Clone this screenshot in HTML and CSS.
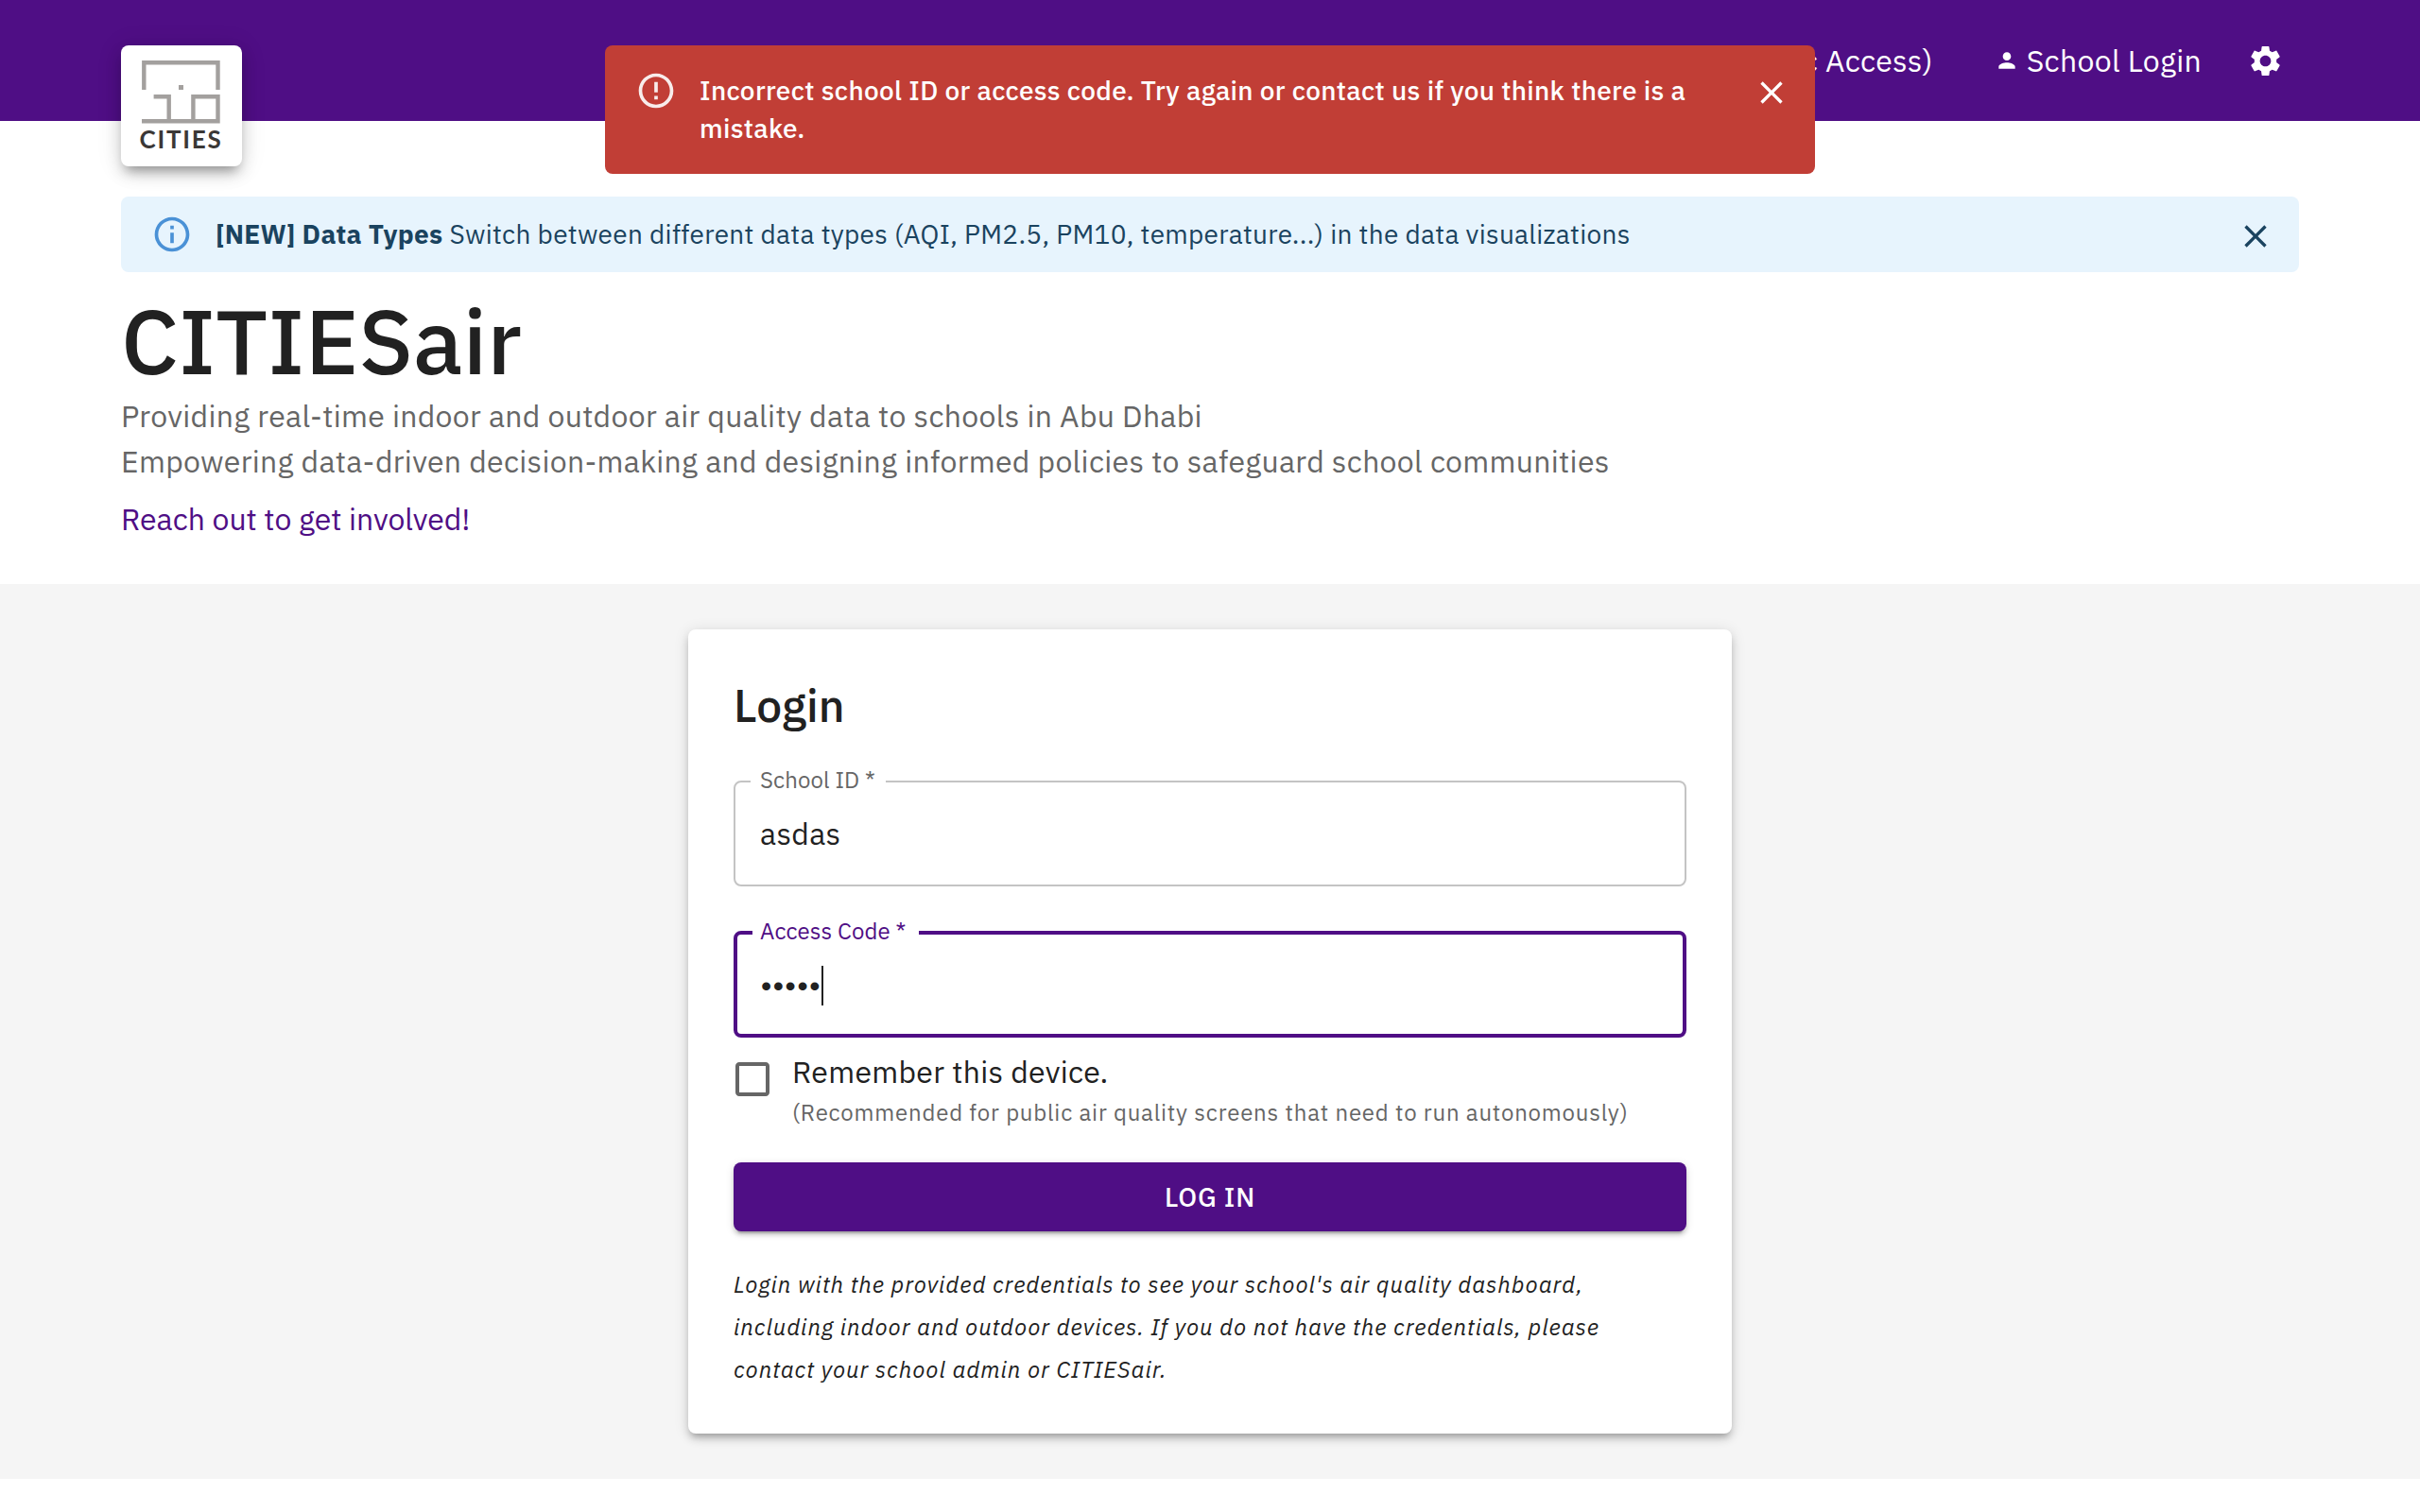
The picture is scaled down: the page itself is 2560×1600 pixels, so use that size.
FILE: index.html
```html
<!DOCTYPE html>
<html lang="en">
<head>
<meta charset="utf-8">
<title>CITIESair</title>
<link rel="stylesheet" href="styles.css">
</head>
<body>
<header class="topbar">
  <a class="logo" href="#" aria-label="CITIES">
    <svg viewBox="0 0 128 128" width="128" height="128">
      <g fill="none" stroke="#a3a09e" stroke-width="4.4">
        <path d="M24.3 47V18.2H102.5V47"/>
        <path d="M34.6 54.2H50.7V80"/>
        <path d="M22 80.2H102.5V54.2H76.4V80"/>
      </g>
      <path fill="#a3a09e" d="M61 42h5v5h-5z"/>
      <text class="logo-text" x="19.4" y="109.3">CITIES</text>
    </svg>
  </a>
  <nav class="nav">
    <a class="nav-link" href="#">NYUAD (Public Access)</a>
    <a class="nav-link nav-login" href="#">
      <svg viewBox="0 0 24 24" width="26" height="26" fill="currentColor"><path d="M12 12c2.21 0 4-1.79 4-4s-1.79-4-4-4-4 1.79-4 4 1.79 4 4 4m0 2c-2.67 0-8 1.34-8 4v2h16v-2c0-2.66-5.33-4-8-4"/></svg>
      School Login
    </a>
    <button class="icon-button nav-settings" aria-label="Settings">
      <svg viewBox="0 0 24 24" width="39" height="39" fill="currentColor"><path d="M19.14 12.94c.04-.3.06-.61.06-.94 0-.32-.02-.64-.07-.94l2.03-1.58c.18-.14.23-.41.12-.61l-1.92-3.32c-.12-.22-.37-.29-.59-.22l-2.39.96c-.5-.38-1.03-.7-1.62-.94l-.36-2.54c-.04-.24-.24-.41-.48-.41h-3.84c-.24 0-.43.17-.47.41l-.36 2.54c-.59.24-1.13.57-1.62.94l-2.39-.96c-.22-.08-.47 0-.59.22L2.74 8.87c-.12.21-.08.47.12.61l2.03 1.58c-.05.3-.09.63-.09.94s.02.64.07.94l-2.03 1.58c-.18.14-.23.41-.12.61l1.92 3.32c.12.22.37.29.59.22l2.39-.96c.5.38 1.03.7 1.62.94l.36 2.54c.05.24.24.41.48.41h3.84c.24 0 .44-.17.47-.41l.36-2.54c.59-.24 1.13-.56 1.62-.94l2.39.96c.22.08.47 0 .59-.22l1.92-3.32c.12-.22.07-.47-.12-.61zM12 15.6c-1.98 0-3.6-1.62-3.6-3.6s1.62-3.6 3.6-3.6 3.6 1.62 3.6 3.6-1.62 3.6-3.6 3.6"/></svg>
    </button>
  </nav>
</header>

<div class="alert toast" role="alert">
  <svg class="alert-icon" viewBox="0 0 24 24" width="44" height="44" fill="currentColor"><path d="M11 15h2v2h-2zm0-8h2v6h-2zm.99-5C6.47 2 2 6.48 2 12s4.47 10 9.99 10C17.52 22 22 17.52 22 12S17.52 2 11.99 2M12 20c-4.42 0-8-3.58-8-8s3.58-8 8-8 8 3.58 8 8-3.58 8-8 8"/></svg>
  <div class="alert-message">Incorrect school ID or access code. Try again or contact us if you think there is a mistake.</div>
  <button class="icon-button alert-close" aria-label="Close">
    <svg viewBox="0 0 24 24" width="40" height="40" fill="currentColor"><path d="M19 6.41 17.59 5 12 10.59 6.41 5 5 6.41 10.59 12 5 17.59 6.41 19 12 13.41 17.59 19 19 17.59 13.41 12z"/></svg>
  </button>
</div>

<section class="intro">
  <div class="alert notice">
    <svg class="alert-icon" viewBox="0 0 24 24" width="44" height="44" fill="currentColor"><path d="M11 7h2v2h-2zm0 4h2v6h-2zm1-9C6.48 2 2 6.48 2 12s4.48 10 10 10 10-4.48 10-10S17.52 2 12 2m0 18c-4.41 0-8-3.59-8-8s3.59-8 8-8 8 3.59 8 8-3.59 8-8 8"/></svg>
    <div class="alert-message"><b>[NEW] Data Types</b> Switch between different data types (AQI, PM2.5, PM10, temperature...) in the data visualizations</div>
    <button class="icon-button alert-close" aria-label="Close">
      <svg viewBox="0 0 24 24" width="40" height="40" fill="currentColor"><path d="M19 6.41 17.59 5 12 10.59 6.41 5 5 6.41 10.59 12 5 17.59 6.41 19 12 13.41 17.59 19 19 17.59 13.41 12z"/></svg>
    </button>
  </div>
  <h1 class="title">CITIESair</h1>
  <p class="lead">Providing real-time indoor and outdoor air quality data to schools in Abu Dhabi<br>Empowering data-driven decision-making and designing informed policies to safeguard school communities</p>
  <a class="reach" href="#">Reach out to get involved!</a>
</section>

<main class="main">
  <form class="card">
    <h2 class="card-title">Login</h2>
    <div class="field">
      <label class="field-label">School ID *</label>
      <div class="field-value">asdas</div>
    </div>
    <div class="field field-focused">
      <label class="field-label">Access Code *</label>
      <div class="field-value"><span class="dots">•••••</span><span class="caret"></span></div>
    </div>
    <label class="remember">
      <svg class="checkbox" viewBox="0 0 24 24" width="48" height="48" fill="currentColor"><path d="M19 5v14H5V5zm0-2H5c-1.1 0-2 .9-2 2v14c0 1.1.9 2 2 2h14c1.1 0 2-.9 2-2V5c0-1.1-.9-2-2-2"/></svg>
      <span class="remember-text">
        <span class="remember-title">Remember this device.</span>
        <span class="remember-hint">(Recommended for public air quality screens that need to run autonomously)</span>
      </span>
    </label>
    <button class="submit" type="button">LOG IN</button>
    <p class="help">Login with the provided credentials to see your school's air quality dashboard, including indoor and outdoor devices. If you do not have the credentials, please contact your school admin or CITIESair.</p>
  </form>
</main>
</body>
</html>
```
FILE: styles.css
```css
* { box-sizing: border-box; }

body {
  margin: 0;
  background: #fff;
  color: #212121;
  font-family: "IBM Plex Sans", Roboto, sans-serif;
  font-size: 32px;
  line-height: 48px;
  letter-spacing: 0.00938em;
}

svg { display: block; flex: none; }
a { color: inherit; text-decoration: none; }
h1, h2, p { margin: 0; }
button { font: inherit; color: inherit; border: 0; background: none; padding: 0; }

.icon-button { display: flex; padding: 10px; }

/* Top bar */
.topbar {
  display: flex;
  justify-content: space-between;
  height: 128px;
  padding: 0 144px 0 128px;
  background: #4f0e85;
  color: #fff;
}

.logo {
  height: 128px;
  margin-top: 48px;
  border-radius: 8px;
  background: #fff;
  box-shadow: 0 10px 12px -6px rgba(0, 0, 0, .3), 0 8px 18px rgba(0, 0, 0, .14), 0 2px 28px rgba(0, 0, 0, .1);
}

.logo-text {
  font: 700 26px Lato, sans-serif;
  letter-spacing: 1.8px;
  fill: #3b3836;
}

.nav { display: flex; align-items: center; }
.nav-login { display: flex; align-items: center; gap: 8px; margin-left: 65px; }
.nav-settings { margin: 0 -10px 0 38px; }

/* Alerts */
.alert {
  display: flex;
  padding: 12px 32px;
  border-radius: 8px;
  font-size: 28px;
  line-height: 40px;
  letter-spacing: 0.01071em;
}

.alert-icon { margin: 14px 24px 0 0; }
.alert-message { flex: 1; padding: 16px 0; }
.alert-close { align-self: flex-start; margin: 8px -16px 0 32px; }

.toast {
  position: fixed;
  top: 48px;
  left: 640px;
  width: 1280px;
  background: #c13e36;
  color: #fff;
  font-weight: 500;
  letter-spacing: 0.0111em;
}

.toast .alert-icon { opacity: .9; }

.notice {
  height: 80px;
  padding-top: 4px;
  padding-bottom: 4px;
  background: #e7f4fd;
  color: #1a435f;
}

.notice .alert-icon { color: #4a91d6; }

/* Intro */
.intro { height: 490px; padding: 80px 128px 0; }
.title { margin-top: 16px; font-size: 96px; font-weight: 500; line-height: 112px; letter-spacing: 0; }
.lead { color: #666; }
.reach { display: block; margin-top: 13px; color: #4f0e85; letter-spacing: 0; }

/* Login card */
.main { height: 947px; padding-top: 48px; background: #f5f5f5; }

.card {
  width: 1104px;
  height: 851px;
  margin: 0 auto;
  padding: 48px;
  border-radius: 8px;
  background: #fff;
  box-shadow: 0 6px 6px -4px rgba(0, 0, 0, .2), 0 6px 8px rgba(0, 0, 0, .14), 0 2px 16px rgba(0, 0, 0, .12);
}

.card-title { font-size: 48px; font-weight: 500; line-height: 64px; letter-spacing: 0; }

.field {
  position: relative;
  height: 112px;
  margin-top: 48px;
  padding: 30px 26px;
  border: 2px solid #c4c4c4;
  border-radius: 8px;
}

.field-label {
  position: absolute;
  top: -15px;
  left: 16px;
  width: 143px;
  padding-left: 10px;
  background: #fff;
  color: #666;
  font-size: 24px;
  line-height: 24px;
  letter-spacing: 0.004em;
}

.field-value { display: flex; align-items: center; }

.field-focused { height: 113px; margin-top: 47px; padding: 29px 24px; border: 4px solid #4f0e85; }
.field-focused .field-label { top: -16px; width: 176px; padding-left: 8px; color: #4f0e85; }

.dots { padding: 1px 0 0 1px; font-family: "Liberation Sans", sans-serif; letter-spacing: 1.6px; }
.caret { width: 2px; height: 42px; background: #212121; }

.remember { display: flex; margin: 12px 0 0 -4px; }
.checkbox { margin: 8px 18px 0 0; color: #666; }
.remember-text { display: flex; flex-direction: column; }
.remember-hint { margin-top: -1px; color: #666; font-size: 24px; line-height: 40px; letter-spacing: 0.0333em; }

.submit {
  display: block;
  width: 100%;
  height: 73px;
  margin-top: 33px;
  border-radius: 8px;
  background: #4f0e85;
  color: #fff;
  font-size: 28px;
  font-weight: 500;
  line-height: 49px;
  letter-spacing: 0.02857em;
  box-shadow: 0 6px 2px -4px rgba(0, 0, 0, .2), 0 4px 4px rgba(0, 0, 0, .14), 0 2px 10px rgba(0, 0, 0, .12);
}

.help { margin-top: 34px; font-size: 24px; font-style: italic; line-height: 45px; letter-spacing: 0.0395em; }
```
